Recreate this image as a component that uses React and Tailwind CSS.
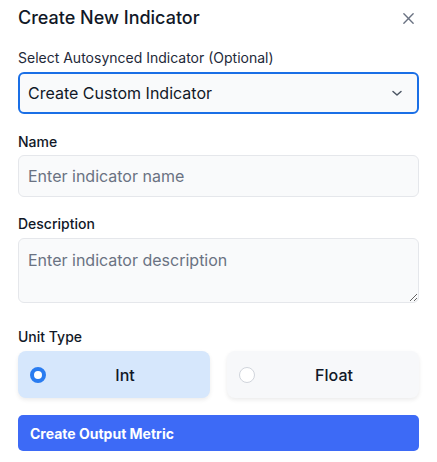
import { useState } from 'react';

const App = () => {
  const [unitType, setUnitType] = useState('int');

  return (
    <div
      className="w-[437px] h-[462px] bg-white px-[18px] pt-[6px] text-[#111827]"
      style={{ fontFamily: 'Inter, "Noto Sans", sans-serif' }}
    >
      <div className="flex items-center justify-between h-[24px]">
        <h2 className="text-[18px] font-medium leading-[24px]">Create New Indicator</h2>
        <button className="mr-[4px] text-gray-500">
          <svg width="13" height="13" viewBox="0 0 14 14" fill="none" stroke="currentColor" strokeWidth="1.5" strokeLinecap="round">
            <path d="M2 2l10 10M12 2L2 12" />
          </svg>
        </button>
      </div>

      <div className="mt-[20px]">
        <label className="block text-[14px] leading-[16px] text-gray-800">
          Select Autosynced Indicator (Optional)
        </label>
        <div className="mt-[6px] h-[42px] flex items-center justify-between rounded-[6px] border-2 border-[#1a6fe6] bg-gray-50 pl-[8px] pr-[13px]">
          <span className="text-[16px]">Create Custom Indicator</span>
          <svg width="14" height="14" viewBox="0 0 14 14" fill="none" stroke="#4b5563" strokeWidth="1.5" strokeLinecap="round" strokeLinejoin="round">
            <path d="M3 5.5L7 9l4-3.5" />
          </svg>
        </div>
      </div>

      <div className="mt-[20px]">
        <label className="block text-[14px] leading-[16px] font-medium">Name</label>
        <input
          type="text"
          placeholder="Enter indicator name"
          className="mt-[5px] w-full h-[42px] rounded-[6px] border border-gray-200 bg-gray-50 px-[9px] text-[16px] placeholder:text-gray-500 outline-none"
        />
      </div>

      <div className="mt-[19px]">
        <label className="block text-[14px] leading-[16px] font-medium">Description</label>
        <textarea
          placeholder="Enter indicator description"
          className="mt-[6px] block w-full h-[65px] rounded-[6px] border border-gray-200 bg-gray-50 px-[9px] py-[9px] text-[16px] leading-[24px] placeholder:text-gray-500 outline-none"
        />
      </div>

      <div className="mt-[26px]">
        <label className="block text-[14px] leading-[16px] font-medium">Unit Type</label>
        <div className="mt-[6px] grid grid-cols-2 gap-[17px]">
          {[
            { id: 'int', label: 'Int' },
            { id: 'float', label: 'Float' },
          ].map((opt) => {
            const active = unitType === opt.id;
            return (
              <button
                key={opt.id}
                onClick={() => setUnitType(opt.id)}
                className={
                  active
                    ? 'h-[47px] flex items-center rounded-[8px] bg-[#d6e7fc] pl-[12px] pr-[6px] shadow-[0_2px_4px_rgba(0,0,0,0.08)]'
                    : 'h-[47px] flex items-center rounded-[8px] bg-[#f7f8fa] pl-[12px] pr-[6px] shadow-[0_2px_4px_rgba(0,0,0,0.08)]'
                }
              >
                {active ? (
                  <span className="w-[16px] h-[16px] rounded-full border-[4px] border-[#2a7cf0] bg-white" />
                ) : (
                  <span className="w-[16px] h-[16px] rounded-full border border-gray-300 bg-white" />
                )}
                <span className="flex-1 text-center text-[16px] font-medium">{opt.label}</span>
              </button>
            );
          })}
        </div>
      </div>

      <button className="mt-[17px] w-full h-[36px] rounded-[5px] bg-[#3d6af6] text-left pl-[12px] text-[14px] font-bold text-white">
        Create Output Metric
      </button>
    </div>
  );
};

export default App;
